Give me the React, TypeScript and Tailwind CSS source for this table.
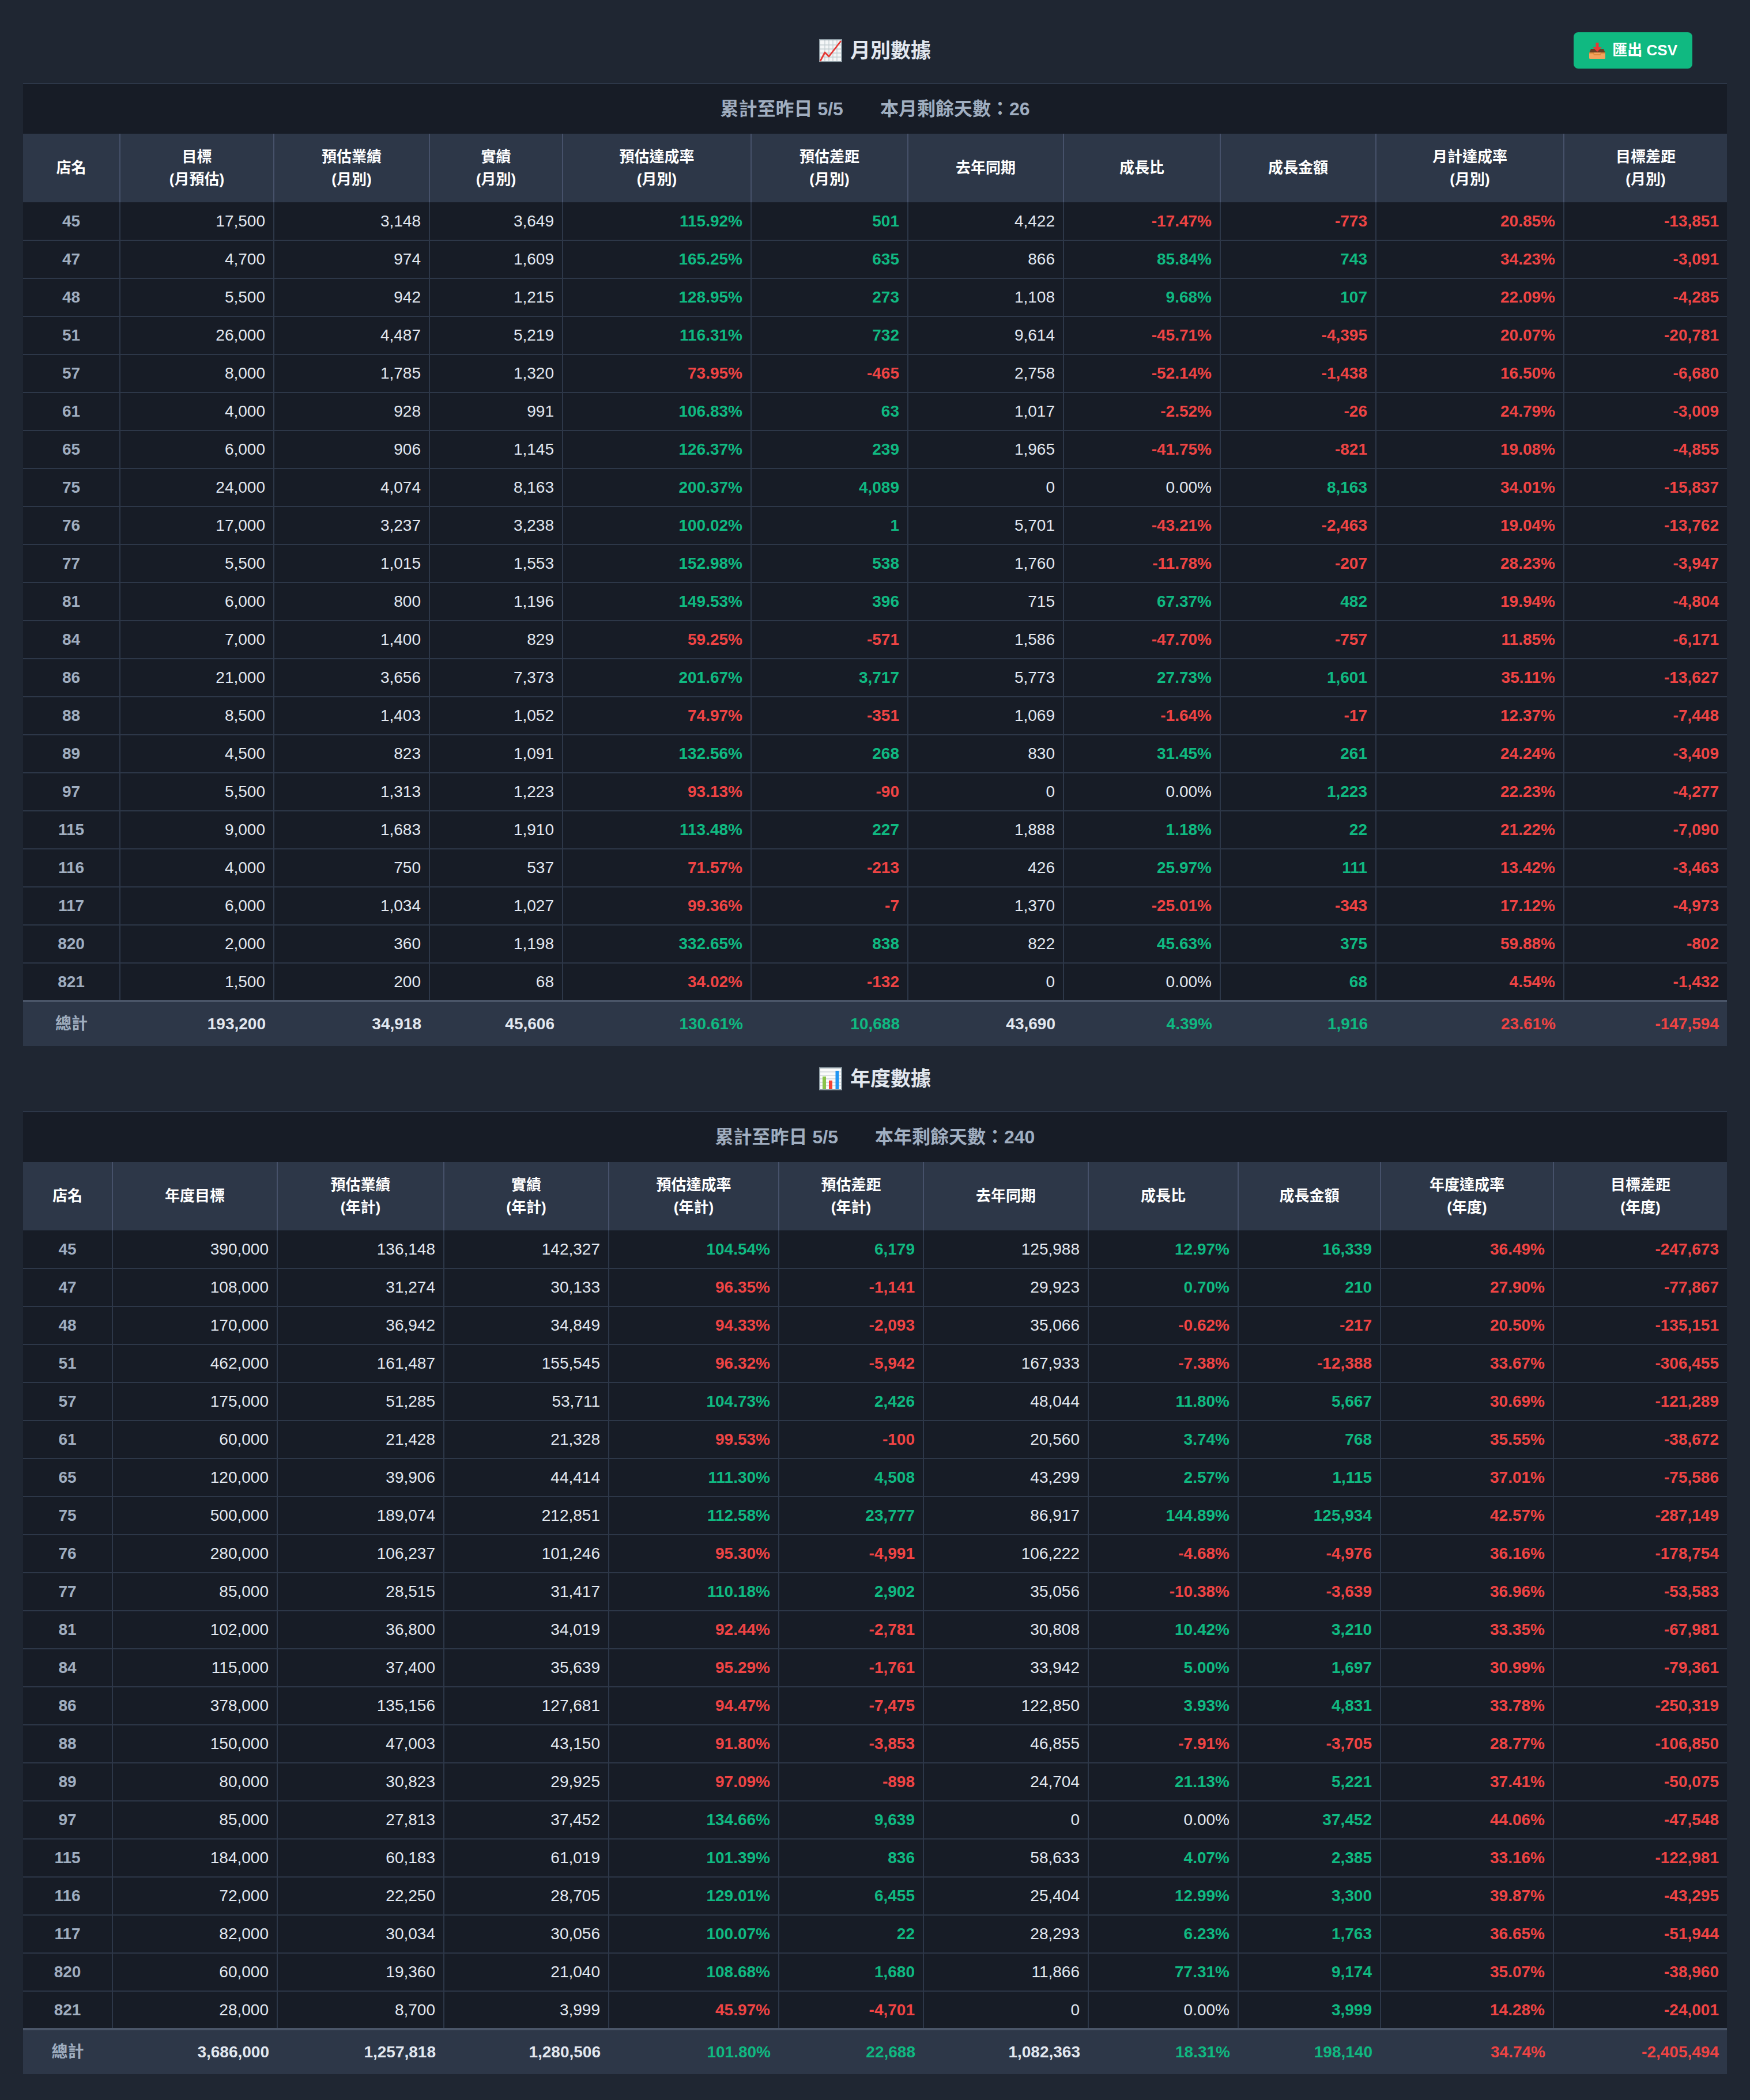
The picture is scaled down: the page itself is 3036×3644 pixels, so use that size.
import React from 'react';

type Kind = 'plain' | 'rate' | 'sign';

interface TableSpec {
  title: string;
  icon: React.ReactNode;
  summary: [string, string];
  headers: string[][];
  cols: string[];
  rows: string[];
  total: string;
  withExport?: boolean;
}

// column 1..10 colouring rules (店名 is column 0)
const KINDS: Kind[] = ['plain', 'plain', 'plain', 'rate', 'sign', 'plain', 'sign', 'sign', 'rate', 'sign'];

const ChartUpIcon = () => (
  <svg width="40" height="40" viewBox="0 0 40 40">
    <rect x="1" y="1" width="38" height="38" fill="#f4f6f7" stroke="#8e9ca4" strokeWidth="2" />
    {[8, 15, 22, 29].map((p) => (
      <g key={p} stroke="#c3ccd1" strokeWidth="1.3">
        <line x1={p + 2} y1="2" x2={p + 2} y2="38" />
        <line x1="2" y1={p + 2} x2="38" y2={p + 2} />
      </g>
    ))}
    <polyline points="2,38 10,23 17,30 38,3" fill="none" stroke="#e53935" strokeWidth="2.8" strokeLinejoin="round" />
  </svg>
);

const BarChartIcon = () => (
  <svg width="40" height="40" viewBox="0 0 40 40">
    <rect x="1" y="1" width="38" height="38" fill="#fafbfb" stroke="#8e9ca4" strokeWidth="2" />
    {[8, 14, 20, 26, 32].map((p) => (
      <line key={p} x1="2" y1={p} x2="38" y2={p} stroke="#cfd6da" strokeWidth="1.3" />
    ))}
    <rect x="6" y="16" width="6" height="22" fill="#8bc34a" />
    <rect x="17" y="23" width="6" height="15" fill="#f44336" />
    <rect x="28.5" y="6" width="6" height="32" fill="#2196f3" />
  </svg>
);

const InboxIcon = () => (
  <svg width="30" height="30" viewBox="0 0 30 30">
    <polygon points="4,12 26,12 29,19 1,19" fill="#6d3f24" />
    <rect x="1" y="18" width="28" height="11" rx="1.5" fill="#f4a35d" />
    <polygon points="1,18 9,18 10,21 20,21 21,18 29,18 29,20 22,20 21,23 9,23 8,20 1,20" fill="#e08a3c" />
    <rect x="12.5" y="1" width="5" height="9" fill="#e53935" />
    <polygon points="7.5,9 22.5,9 15,17" fill="#e53935" />
  </svg>
);

const toneClass = (value: string, kind: Kind, total: boolean): string => {
  const num = parseFloat(value.replace(/[,%]/g, ''));
  const plain = total ? 'text-[#e2e8f0] font-bold' : 'text-[#e2e8f0]';
  if (kind === 'rate') return num >= 100 ? 'text-[#10b981] font-bold' : 'text-[#ef4444] font-bold';
  if (kind === 'sign') {
    if (num > 0) return 'text-[#10b981] font-bold';
    if (num < 0) return 'text-[#ef4444] font-bold';
  }
  return plain;
};

const DataTable: React.FC<{ spec: TableSpec }> = ({ spec }) => {
  const totalCells = spec.total.split(' ');

  return (
    <section>
      {/* Title bar */}
      <div className="grid grid-cols-[1fr_auto_1fr] items-center h-[63px] mb-[25px]">
        <div />
        <h2 className="flex items-center gap-[14px] text-[35px] font-bold text-[#e2e8f0] leading-none">
          {spec.icon}
          <span>{spec.title}</span>
        </h2>
        <div className="flex justify-end">
          {spec.withExport && (
            <button className="mr-[60px] flex items-center gap-[11px] h-[63px] px-[26px] rounded-[8px] bg-[#10b981] text-white text-[26px] font-bold">
              <InboxIcon />
              <span>匯出 CSV</span>
            </button>
          )}
        </div>
      </div>

      <div className="border-t-2 border-[#2d3748] bg-[#171c26]">
        <div className="flex items-center justify-center gap-[64px] h-[86px] text-[32px] font-bold text-[#a0aec0]">
          <span>{spec.summary[0]}</span>
          <span>{spec.summary[1]}</span>
        </div>

        <table className="w-full table-fixed border-collapse">
          <colgroup>
            {spec.cols.map((c, i) => (
              <col key={i} className={c} />
            ))}
          </colgroup>
          <thead>
            <tr className="bg-[#2d3748]">
              {spec.headers.map((h, i) => (
                <th
                  key={i}
                  className="h-[119px] px-2 text-center text-[26px] leading-[39px] font-bold text-white border-l-2 border-[#46516a] first:border-l-0"
                >
                  {h[0]}
                  {h[1] && (
                    <>
                      <br />
                      {h[1]}
                    </>
                  )}
                </th>
              ))}
            </tr>
          </thead>
          <tbody>
            {spec.rows.map((row) => {
              const cells = row.split(' ');
              return (
                <tr key={cells[0]} className="border-b-2 border-[#2d3748]">
                  <td className="h-[66px] text-center text-[28px] font-bold text-[#a0aec0]">{cells[0]}</td>
                  {cells.slice(1).map((v, i) => (
                    <td
                      key={i}
                      className={`h-[66px] pr-[14px] text-right text-[28px] border-l-2 border-[#2d3748] ${toneClass(v, KINDS[i], false)}`}
                    >
                      {v}
                    </td>
                  ))}
                </tr>
              );
            })}
            <tr className="bg-[#2d3748] border-t-4 border-[#4a5568]">
              <td className="h-[78px] text-center text-[28px] font-bold text-[#a0aec0]">總計</td>
              {totalCells.map((v, i) => (
                <td key={i} className={`h-[78px] pr-[14px] text-right text-[28px] ${toneClass(v, KINDS[i], true)}`}>
                  {v}
                </td>
              ))}
            </tr>
          </tbody>
        </table>
      </div>
    </section>
  );
};

const MONTHLY: TableSpec = {
  title: '月別數據',
  icon: <ChartUpIcon />,
  summary: ['累計至昨日 5/5', '本月剩餘天數：26'],
  withExport: true,
  headers: [
    ['店名'],
    ['目標', '(月預估)'],
    ['預估業績', '(月別)'],
    ['實績', '(月別)'],
    ['預估達成率', '(月別)'],
    ['預估差距', '(月別)'],
    ['去年同期'],
    ['成長比'],
    ['成長金額'],
    ['月計達成率', '(月別)'],
    ['目標差距', '(月別)'],
  ],
  cols: ['w-[168px]', 'w-[267px]', 'w-[270px]', 'w-[231px]', 'w-[327px]', 'w-[272px]', 'w-[270px]', 'w-[272px]', 'w-[270px]', 'w-[326px]', 'w-[283px]'],
  rows: [
    '45 17,500 3,148 3,649 115.92% 501 4,422 -17.47% -773 20.85% -13,851',
    '47 4,700 974 1,609 165.25% 635 866 85.84% 743 34.23% -3,091',
    '48 5,500 942 1,215 128.95% 273 1,108 9.68% 107 22.09% -4,285',
    '51 26,000 4,487 5,219 116.31% 732 9,614 -45.71% -4,395 20.07% -20,781',
    '57 8,000 1,785 1,320 73.95% -465 2,758 -52.14% -1,438 16.50% -6,680',
    '61 4,000 928 991 106.83% 63 1,017 -2.52% -26 24.79% -3,009',
    '65 6,000 906 1,145 126.37% 239 1,965 -41.75% -821 19.08% -4,855',
    '75 24,000 4,074 8,163 200.37% 4,089 0 0.00% 8,163 34.01% -15,837',
    '76 17,000 3,237 3,238 100.02% 1 5,701 -43.21% -2,463 19.04% -13,762',
    '77 5,500 1,015 1,553 152.98% 538 1,760 -11.78% -207 28.23% -3,947',
    '81 6,000 800 1,196 149.53% 396 715 67.37% 482 19.94% -4,804',
    '84 7,000 1,400 829 59.25% -571 1,586 -47.70% -757 11.85% -6,171',
    '86 21,000 3,656 7,373 201.67% 3,717 5,773 27.73% 1,601 35.11% -13,627',
    '88 8,500 1,403 1,052 74.97% -351 1,069 -1.64% -17 12.37% -7,448',
    '89 4,500 823 1,091 132.56% 268 830 31.45% 261 24.24% -3,409',
    '97 5,500 1,313 1,223 93.13% -90 0 0.00% 1,223 22.23% -4,277',
    '115 9,000 1,683 1,910 113.48% 227 1,888 1.18% 22 21.22% -7,090',
    '116 4,000 750 537 71.57% -213 426 25.97% 111 13.42% -3,463',
    '117 6,000 1,034 1,027 99.36% -7 1,370 -25.01% -343 17.12% -4,973',
    '820 2,000 360 1,198 332.65% 838 822 45.63% 375 59.88% -802',
    '821 1,500 200 68 34.02% -132 0 0.00% 68 4.54% -1,432',
  ],
  total: '193,200 34,918 45,606 130.61% 10,688 43,690 4.39% 1,916 23.61% -147,594',
};

const YEARLY: TableSpec = {
  title: '年度數據',
  icon: <BarChartIcon />,
  summary: ['累計至昨日 5/5', '本年剩餘天數：240'],
  headers: [
    ['店名'],
    ['年度目標'],
    ['預估業績', '(年計)'],
    ['實績', '(年計)'],
    ['預估達成率', '(年計)'],
    ['預估差距', '(年計)'],
    ['去年同期'],
    ['成長比'],
    ['成長金額'],
    ['年度達成率', '(年度)'],
    ['目標差距', '(年度)'],
  ],
  cols: ['w-[155px]', 'w-[286px]', 'w-[289px]', 'w-[286px]', 'w-[295px]', 'w-[251px]', 'w-[286px]', 'w-[260px]', 'w-[247px]', 'w-[300px]', 'w-[301px]'],
  rows: [
    '45 390,000 136,148 142,327 104.54% 6,179 125,988 12.97% 16,339 36.49% -247,673',
    '47 108,000 31,274 30,133 96.35% -1,141 29,923 0.70% 210 27.90% -77,867',
    '48 170,000 36,942 34,849 94.33% -2,093 35,066 -0.62% -217 20.50% -135,151',
    '51 462,000 161,487 155,545 96.32% -5,942 167,933 -7.38% -12,388 33.67% -306,455',
    '57 175,000 51,285 53,711 104.73% 2,426 48,044 11.80% 5,667 30.69% -121,289',
    '61 60,000 21,428 21,328 99.53% -100 20,560 3.74% 768 35.55% -38,672',
    '65 120,000 39,906 44,414 111.30% 4,508 43,299 2.57% 1,115 37.01% -75,586',
    '75 500,000 189,074 212,851 112.58% 23,777 86,917 144.89% 125,934 42.57% -287,149',
    '76 280,000 106,237 101,246 95.30% -4,991 106,222 -4.68% -4,976 36.16% -178,754',
    '77 85,000 28,515 31,417 110.18% 2,902 35,056 -10.38% -3,639 36.96% -53,583',
    '81 102,000 36,800 34,019 92.44% -2,781 30,808 10.42% 3,210 33.35% -67,981',
    '84 115,000 37,400 35,639 95.29% -1,761 33,942 5.00% 1,697 30.99% -79,361',
    '86 378,000 135,156 127,681 94.47% -7,475 122,850 3.93% 4,831 33.78% -250,319',
    '88 150,000 47,003 43,150 91.80% -3,853 46,855 -7.91% -3,705 28.77% -106,850',
    '89 80,000 30,823 29,925 97.09% -898 24,704 21.13% 5,221 37.41% -50,075',
    '97 85,000 27,813 37,452 134.66% 9,639 0 0.00% 37,452 44.06% -47,548',
    '115 184,000 60,183 61,019 101.39% 836 58,633 4.07% 2,385 33.16% -122,981',
    '116 72,000 22,250 28,705 129.01% 6,455 25,404 12.99% 3,300 39.87% -43,295',
    '117 82,000 30,034 30,056 100.07% 22 28,293 6.23% 1,763 36.65% -51,944',
    '820 60,000 19,360 21,040 108.68% 1,680 11,866 77.31% 9,174 35.07% -38,960',
    '821 28,000 8,700 3,999 45.97% -4,701 0 0.00% 3,999 14.28% -24,001',
  ],
  total: '3,686,000 1,257,818 1,280,506 101.80% 22,688 1,082,363 18.31% 198,140 34.74% -2,405,494',
};

export default function App() {
  return (
    <div className="min-h-screen bg-[#1f2632] px-[40px] pt-[56px] pb-[40px] font-['Liberation_Sans','Noto_Sans_CJK_TC',sans-serif]">
      <div className="flex flex-col gap-[25px]">
        <DataTable spec={MONTHLY} />
        <DataTable spec={YEARLY} />
      </div>
    </div>
  );
}
